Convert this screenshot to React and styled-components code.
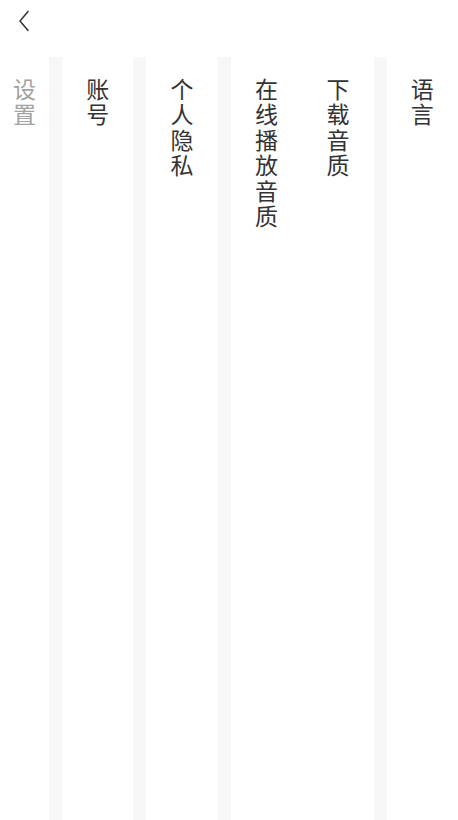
import React from 'react';
import styled, { createGlobalStyle } from 'styled-components';

const GlobalStyle = createGlobalStyle`
  html, body {
    margin: 0;
    padding: 0;
    background: #fff;
  }
  body {
    font-family: "Noto Sans CJK SC", "Noto Sans", sans-serif;
  }
`;

const Page = styled.div`
  display: flex;
  flex-direction: column;
  width: 100%;
  height: 100vh;
  overflow: hidden;
`;

const Header = styled.div`
  height: 57px;
  display: flex;
  align-items: flex-start;
  padding: 10px 0 0 18px;
  box-sizing: border-box;
  flex-shrink: 0;
`;

const BackButton = styled.button`
  border: none;
  background: none;
  padding: 0;
  width: 12px;
  height: 22px;
  cursor: pointer;
  display: flex;
`;

const Columns = styled.div`
  flex: 1;
  display: flex;
  align-items: stretch;
`;

const TitleColumn = styled.div`
  width: 49px;
  flex-shrink: 0;
  display: flex;
  justify-content: center;
  padding-top: 19px;
`;

const Divider = styled.div`
  width: 13px;
  flex-shrink: 0;
  background: #f7f7f7;
`;

const Group = styled.div`
  flex: ${(p) => p.$size || 1};
  display: flex;
`;

const Item = styled.div`
  flex: 1;
  display: flex;
  justify-content: center;
  padding-top: 19px;
  cursor: pointer;
`;

const VerticalText = styled.div`
  width: 1em;
  font-size: 23px;
  line-height: 25.4px;
  word-break: break-all;
  color: ${(p) => (p.$muted ? '#a3a3a3' : '#333')};
`;

const groups = [
  ['账号'],
  ['个人隐私'],
  ['在线播放音质', '下载音质'],
  ['语言'],
];

const ChevronLeft = () => (
  <svg width="12" height="22" viewBox="0 0 12 22" fill="none">
    <path d="M10 1.5 L2 11 L10 20.5" stroke="#333" strokeWidth="1.5" strokeLinecap="round" strokeLinejoin="round" />
  </svg>
);

export default function App() {
  return (
    <Page>
      <GlobalStyle />
      <Header>
        <BackButton aria-label="返回">
          <ChevronLeft />
        </BackButton>
      </Header>
      <Columns>
        <TitleColumn>
          <VerticalText $muted>设置</VerticalText>
        </TitleColumn>
        {groups.map((items, i) => (
          <React.Fragment key={i}>
            <Divider />
            <Group $size={items.length}>
              {items.map((label) => (
                <Item key={label}>
                  <VerticalText>{label}</VerticalText>
                </Item>
              ))}
            </Group>
          </React.Fragment>
        ))}
      </Columns>
    </Page>
  );
}
